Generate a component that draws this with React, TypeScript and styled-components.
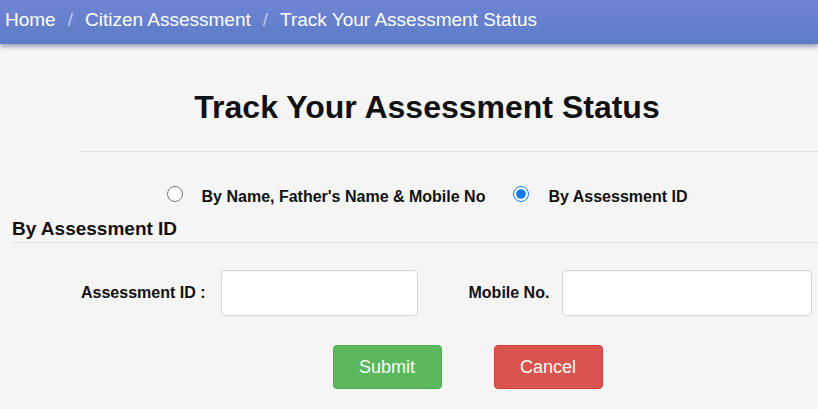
import styled, { createGlobalStyle } from 'styled-components'

const GlobalStyle = createGlobalStyle`
  html, body {
    margin: 0;
    padding: 0;
    background: #f5f5f5;
    font-family: 'Liberation Sans', Arial, sans-serif;
  }
`

const Page = styled.div`
  width: 818px;
  height: 409px;
  overflow: hidden;
  background: #f5f5f5;
`

const Breadcrumb = styled.nav`
  display: flex;
  align-items: center;
  box-sizing: border-box;
  height: 44px;
  padding: 0 0 4px 5px;
  background: linear-gradient(#7085d4, #5b7cc6);
  box-shadow: 0 3px 4px rgba(60, 70, 110, 0.45);
  color: #ffffff;
  font-size: 19px;
`

const Crumb = styled.span`
  color: #ffffff;
`

const Slash = styled.span`
  padding: 0 12px 0 12px;
  color: rgba(255, 255, 255, 0.6);
`

const TitleWrap = styled.div`
  margin: 44px 0 0 80px;
  padding-bottom: 25px;
  border-bottom: 1px solid #e6e6e6;
`

const Title = styled.h1`
  margin: 0;
  padding-right: 44px;
  text-align: center;
  font-size: 32px;
  line-height: 38px;
  font-weight: 700;
  color: #111111;
`

const RadioRow = styled.div`
  display: flex;
  align-items: center;
  justify-content: center;
  height: 24px;
  margin-top: 33px;
  padding-left: 36px;
  font-size: 16px;
  font-weight: 700;
  color: #111111;
`

const RadioOption = styled.label<{ $gapAfter?: number }>`
  display: flex;
  align-items: center;
  gap: 19px;
  margin-right: ${({ $gapAfter }) => $gapAfter ?? 0}px;
`

const Radio = styled.input`
  width: 16px;
  height: 16px;
  margin: -6px 0 0 0;
  accent-color: #0a7cf0;
`

const SectionHead = styled.div`
  margin: 9px 0 0 10px;
  padding: 0 0 2px 2px;
  border-bottom: 1px solid #e6e6e6;
`

const SectionTitle = styled.h3`
  margin: 0;
  font-size: 19px;
  line-height: 22px;
  font-weight: 700;
  color: #111111;
`

const FormRow = styled.div`
  display: flex;
  align-items: center;
  margin-top: 27px;
  padding-left: 81px;
`

const Label = styled.label<{ $lead?: number; $trail: number }>`
  margin-left: ${({ $lead }) => $lead ?? 0}px;
  margin-right: ${({ $trail }) => $trail}px;
  font-size: 16px;
  font-weight: 700;
  color: #111111;
`

const TextInput = styled.input<{ $width: number }>`
  box-sizing: border-box;
  width: ${({ $width }) => $width}px;
  height: 46px;
  border: 1px solid #d6d6d6;
  border-radius: 4px;
  background: #ffffff;
  box-shadow: inset 0 1px 1px rgba(0, 0, 0, 0.04);
  outline: none;
`

const ButtonRow = styled.div`
  display: flex;
  justify-content: center;
  gap: 52px;
  margin-top: 29px;
  padding-left: 117px;
`

const Button = styled.button<{ $variant: 'submit' | 'cancel' }>`
  width: 109px;
  height: 44px;
  border-radius: 4px;
  border: 1px solid ${({ $variant }) => ($variant === 'submit' ? '#4cae4c' : '#d43f3a')};
  background: ${({ $variant }) => ($variant === 'submit' ? '#5cb85c' : '#d9534f')};
  color: #f6fff4;
  font-family: 'Liberation Sans', Arial, sans-serif;
  font-size: 18px;
  cursor: pointer;
`

export default function App() {
  return (
    <Page>
      <GlobalStyle />
      <Breadcrumb>
        <Crumb>Home</Crumb>
        <Slash>/</Slash>
        <Crumb>Citizen Assessment</Crumb>
        <Slash>/</Slash>
        <Crumb>Track Your Assessment Status</Crumb>
      </Breadcrumb>
      <TitleWrap>
        <Title>Track Your Assessment Status</Title>
      </TitleWrap>
      <RadioRow>
        <RadioOption $gapAfter={28}>
          <Radio type="radio" name="mode" />
          By Name, Father's Name &amp; Mobile No
        </RadioOption>
        <RadioOption>
          <Radio type="radio" name="mode" defaultChecked />
          By Assessment ID
        </RadioOption>
      </RadioRow>
      <SectionHead>
        <SectionTitle>By Assessment ID</SectionTitle>
      </SectionHead>
      <FormRow>
        <Label $trail={15}>Assessment ID :</Label>
        <TextInput $width={197} />
        <Label $lead={51} $trail={13}>
          Mobile No.
        </Label>
        <TextInput $width={250} />
      </FormRow>
      <ButtonRow>
        <Button $variant="submit">Submit</Button>
        <Button $variant="cancel">Cancel</Button>
      </ButtonRow>
    </Page>
  )
}
